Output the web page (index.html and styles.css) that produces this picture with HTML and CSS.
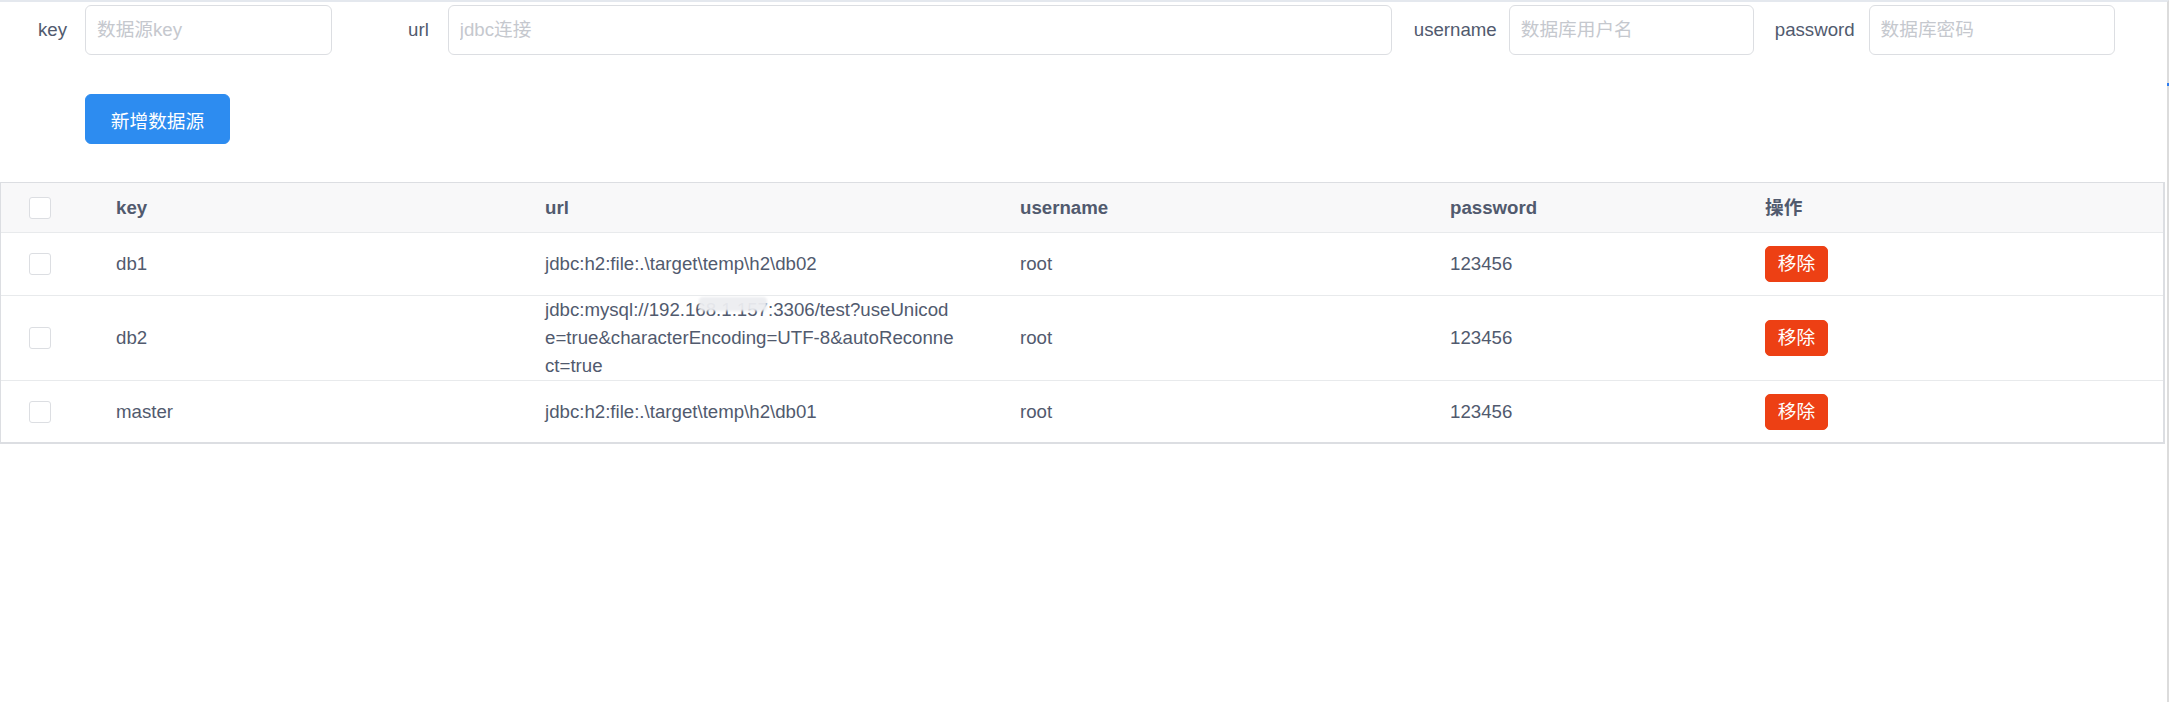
FILE: index.html
```html
<!DOCTYPE html>
<html lang="zh-CN">
<head>
<meta charset="utf-8">
<title>数据源管理</title>
<link rel="stylesheet" href="styles.css">
</head>
<body>
<div class="page">
  <span class="edge-dot"></span>
  <form class="filters">
    <div class="field field-key">
      <label class="field-label">key</label>
      <input class="input input-key" type="text" placeholder="数据源key">
    </div>
    <div class="field field-url">
      <label class="field-label">url</label>
      <input class="input input-url" type="text" placeholder="jdbc连接">
    </div>
    <div class="field field-user">
      <label class="field-label">username</label>
      <input class="input input-user" type="text" placeholder="数据库用户名">
    </div>
    <div class="field field-pass">
      <label class="field-label">password</label>
      <input class="input input-pass" type="text" placeholder="数据库密码">
    </div>
  </form>

  <div class="toolbar">
    <button class="btn btn-primary" type="button">新增数据源</button>
  </div>

  <div class="table">
    <div class="row head">
      <div class="cell cell-check"><span class="checkbox"></span></div>
      <div class="cell">key</div>
      <div class="cell">url</div>
      <div class="cell">username</div>
      <div class="cell">password</div>
      <div class="cell">操作</div>
    </div>
    <div class="row">
      <div class="cell cell-check"><span class="checkbox"></span></div>
      <div class="cell">db1</div>
      <div class="cell cell-url">jdbc:h2:file:.\target\temp\h2\db02</div>
      <div class="cell">root</div>
      <div class="cell">123456</div>
      <div class="cell"><button class="btn btn-error" type="button">移除</button></div>
    </div>
    <div class="row">
      <div class="cell cell-check"><span class="checkbox"></span></div>
      <div class="cell">db2</div>
      <div class="cell cell-url">
        <span class="url-line">jdbc:mysql://192.168.1.157:3306/test?useUnicod<span class="mask"></span></span>
        <span class="url-line">e=true&amp;characterEncoding=UTF-8&amp;autoReconne</span>
        <span class="url-line">ct=true</span>
      </div>
      <div class="cell">root</div>
      <div class="cell">123456</div>
      <div class="cell"><button class="btn btn-error" type="button">移除</button></div>
    </div>
    <div class="row last">
      <div class="cell cell-check"><span class="checkbox"></span></div>
      <div class="cell">master</div>
      <div class="cell cell-url">jdbc:h2:file:.\target\temp\h2\db01</div>
      <div class="cell">root</div>
      <div class="cell">123456</div>
      <div class="cell"><button class="btn btn-error" type="button">移除</button></div>
    </div>
  </div>
</div>
</body>
</html>
```

FILE: styles.css
```css
html, body {
  margin: 0;
  padding: 0;
  background: #fff;
}

body {
  font-family: "Liberation Sans", "Noto Sans CJK SC", sans-serif;
  font-size: 18.67px;
  line-height: 28px;
  color: #515a6e;
}

.page {
  position: relative;
  box-sizing: border-box;
  width: 2169px;
  min-height: 702px;
  border-top: 2px solid #e4e8ee;
  border-right: 2px solid #dcdcdc;
}

.edge-dot {
  position: absolute;
  right: -2px;
  top: 81px;
  width: 2px;
  height: 3px;
  background: #2d7cf0;
}

/* ---------- filter form ---------- */
.filters {
  display: flex;
  align-items: center;
  margin: 3px 0 0 0;
}

.field {
  display: flex;
  align-items: center;
}

.field-label {
  color: #515a6e;
  white-space: nowrap;
}

.field-key { margin-left: 38px; }
.field-key .field-label { margin-right: 18px; }

.field-url { margin-left: 76px; }
.field-url .field-label { margin-right: 19px; }

.field-user { margin-left: 22px; }
.field-user .field-label { margin-right: 12px; }

.field-pass { margin-left: 21px; }
.field-pass .field-label { margin-right: 14px; }

.input {
  box-sizing: border-box;
  height: 50px;
  padding: 0 11px;
  border: 1px solid #dcdee2;
  border-radius: 6px;
  background: #fff;
  font-family: "Liberation Sans", "Noto Sans CJK SC", sans-serif;
  font-size: 18.67px;
  color: #515a6e;
  outline: none;
}

.input::placeholder {
  color: #c5c8ce;
}

.input-key { width: 247px; }
.input-url { width: 944px; }
.input-user { width: 245px; }
.input-pass { width: 246px; }

/* ---------- toolbar ---------- */
.toolbar {
  margin-top: 39px;
  padding-left: 85px;
  display: flex;
}

.btn {
  font-family: "Liberation Sans", "Noto Sans CJK SC", sans-serif;
  font-size: 18.67px;
  color: #fff;
  cursor: pointer;
  box-sizing: border-box;
  white-space: nowrap;
}

.btn-primary {
  width: 145px;
  height: 50px;
  padding: 0;
  border: 1px solid #2d8cf0;
  border-radius: 6px;
  background: #2d8cf0;
}

.btn-error {
  width: 63px;
  height: 36px;
  padding: 0;
  border: 1px solid #ed4014;
  border-radius: 5px;
  background: #ed4014;
  line-height: 34px;
}

/* ---------- table ---------- */
.table {
  margin-top: 38px;
  box-sizing: border-box;
  width: 2165px;
  border-top: 1px solid #dcdee2;
  border-left: 1px solid #dcdee2;
  border-right: 2px solid #dcdee2;
  border-bottom: 2px solid #dcdee2;
}

.row {
  display: grid;
  grid-template-columns: 87px 429px 475px 430px 315px 1fr;
  align-items: center;
  box-sizing: border-box;
  min-height: 63px;
  border-bottom: 1px solid #e8eaec;
}

.row.last {
  border-bottom: 0;
  min-height: 61px;
}

.row.head {
  min-height: 50px;
  background: #f8f8f9;
  font-weight: bold;
}

.cell {
  padding: 0 0 0 28px;
  white-space: nowrap;
}

.cell-check {
  padding-left: 28px;
  display: flex;
  align-items: center;
}

.cell-url {
  position: relative;
  padding-right: 0;
}

.url-line {
  display: block;
  position: relative;
}

.mask {
  position: absolute;
  left: 154px;
  top: 1px;
  width: 68px;
  height: 14px;
  border-radius: 4px;
  background: rgba(236, 237, 240, 0.95);
  filter: blur(1px);
}

.checkbox {
  display: inline-block;
  box-sizing: border-box;
  width: 22px;
  height: 22px;
  border: 1px solid #dcdee2;
  border-radius: 3px;
  background: #fff;
}
```
